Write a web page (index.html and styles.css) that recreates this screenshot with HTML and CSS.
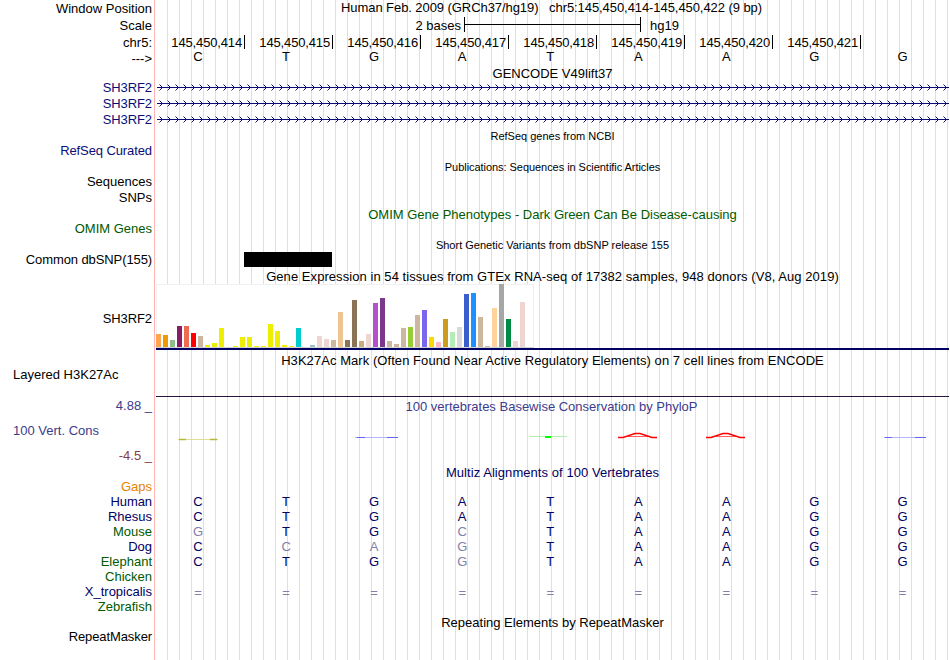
FILE: index.html
```html
<!DOCTYPE html>
<html lang="en">
<head>
    <meta charset="UTF-8">
    <title>hg19 chr5:145,450,414-145,450,422</title>
    <link rel="stylesheet" href="styles.css">
</head>
<body>
<div class="browser">
    <div class="row ruler"><div class="label">Window Position</div><div class="title position">Human Feb. 2009 (GRCh37/hg19) &nbsp; chr5:145,450,414-145,450,422 (9 bp)</div></div>
    <div class="row ruler"><div class="label">Scale</div><div class="scale"><span class="s-left">2 bases</span><i class="s-bar"></i><span>hg19</span></div></div>
    <div class="row ruler"><div class="label">chr5:</div>
        <div class="coords"><span>145,450,414</span><span>145,450,415</span><span>145,450,416</span><span>145,450,417</span><span>145,450,418</span><span>145,450,419</span><span>145,450,420</span><span>145,450,421</span></div>
    </div>
    <div class="row h15"><div class="label">---&gt;</div><div class="bases genome" data-seq="CTGATAAGG"></div></div>

    <div class="row h14"><div class="title">GENCODE V49lift37</div></div>
    <div class="row h16 navy"><div class="label tight">SH3RF2</div><svg class="gene" width="792" height="16"></svg></div>
    <div class="row h16 navy"><div class="label tight">SH3RF2</div><svg class="gene" width="792" height="16"></svg></div>
    <div class="row h16 navy"><div class="label tight">SH3RF2</div><svg class="gene" width="792" height="16"></svg></div>

    <div class="row h15"><div class="title small">RefSeq genes from NCBI</div></div>
    <div class="row h16 navy"><div class="label tight">RefSeq Curated</div></div>
    <div class="row h15"><div class="title small pubs">Publications: Sequences in Scientific Articles</div></div>
    <div class="row h16"><div class="label">Sequences</div></div>
    <div class="row h16"><div class="label">SNPs</div></div>
    <div class="row h15 green"><div class="title">OMIM Gene Phenotypes - Dark Green Can Be Disease-causing</div></div>
    <div class="row h16 green"><div class="label">OMIM Genes</div></div>
    <div class="row h15"><div class="title small">Short Genetic Variants from dbSNP release 155</div></div>
    <div class="row h16"><div class="label tight">Common dbSNP(155)</div><div class="snp"></div></div>

    <div class="row h16"><div class="title wide">Gene Expression in 54 tissues from GTEx RNA-seq of 17382 samples, 948 donors (V8, Aug 2019)</div></div>
    <div class="row gtex"><div class="label tight">SH3RF2</div><div class="expr"><div class="bars" id="bars"></div></div></div>

    <div class="row h20"><div class="title wide">H3K27Ac Mark (Often Found Near Active Regulatory Elements) on 7 cell lines from ENCODE</div></div>
    <div class="row hist"><div class="label left">Layered H3K27Ac</div></div>

    <div class="row h16 cons"><div class="label limit">4.88 _</div><div class="title phylop-title">100 vertebrates Basewise Conservation by PhyloP</div></div>
    <div class="row phylop">
        <div class="label left cons">100 Vert. Cons</div>
        <svg class="wiggle" width="793" height="34">
            <path d="M22 23.5H62" stroke="#dede98"/><path d="M23 23.5H30M54 23.5H61" stroke="#b8b840" stroke-width="1.5"/>
            <path d="M199 21.5H242" stroke="#b4b4ff"/><path d="M201 21.5H209M231 21.5H242" stroke="#6464ff"/>
            <path d="M373 20.5H411" stroke="#b0f0b0"/><path d="M389 21H395" stroke="#00ff00" stroke-width="2"/>
            <path d="M472 20.5H492M560 20.5H580" stroke="#ff6060"/>
            <path d="M462 21.5H467L479 17.5H484L496 21.5H501M550 21.5H555L567 17.5H572L584 21.5H589" fill="none" stroke="#ff0000" stroke-width="1.5"/>
            <path d="M728 21.5H770" stroke="#b4b4ff"/><path d="M729 21.5H736M759 21.5H770" stroke="#6464ff"/>
        </svg>
    </div>
    <div class="row h15 neg"><div class="label limit">-4.5 _</div></div>

    <div class="row h15 dark"><div class="title wide">Multiz Alignments of 100 Vertebrates</div></div>
    <div class="row h15 orange"><div class="label">Gaps</div></div>
    <div class="row h15 dark"><div class="label tight">Human</div><div class="bases" data-seq="CTGATAAGG"></div></div>
    <div class="row h15 dark"><div class="label">Rhesus</div><div class="bases" data-seq="CTGATAAGG"></div></div>
    <div class="row h15 green"><div class="label">Mouse</div><div class="bases" data-seq="gTGcTAAGG"></div></div>
    <div class="row h15 dark"><div class="label">Dog</div><div class="bases" data-seq="CcagTAAGG"></div></div>
    <div class="row h15 green"><div class="label">Elephant</div><div class="bases" data-seq="CTGgTAAGG"></div></div>
    <div class="row h15 green"><div class="label">Chicken</div></div>
    <div class="row h15 dark"><div class="label">X_tropicalis</div><div class="bases gap" data-seq="========="></div></div>
    <div class="row h15 green"><div class="label">Zebrafish</div></div>
    <div class="row h16"><div class="title">Repeating Elements by RepeatMasker</div></div>
    <div class="row h14"><div class="label tight">RepeatMasker</div></div>
</div>
<script src="tracks.js"></script>
</body>
</html>
```
FILE: styles.css
```css
body {
    margin: 0;
    background: #fff;
    font-family: "Liberation Sans", Arial, sans-serif;
    font-size: 13px;
    color: #000;
}

.browser {
    width: 949px;
    height: 660px;
    overflow: hidden;
    background:
        linear-gradient(#ffb4b4, #ffb4b4) 154px 0 / 1px 100% no-repeat,
        repeating-linear-gradient(90deg, #dcdcf5 0 1px, transparent 1px 12px) 167px 0 / 782px 100% no-repeat;
}

.row {
    display: grid;
    grid-template-columns: 152px 793px;
    grid-template-rows: 100%;
    column-gap: 4px;
    height: 16px;
    line-height: 16px;
    white-space: nowrap;
}

.h14 { height: 14px; line-height: 14px; }
.h15 { height: 15px; line-height: 15px; }
.h16 { height: 16px; line-height: 16px; }
.h20 { height: 20px; line-height: 20px; }
.ruler { height: 17px; line-height: 17px; }

.navy { color: #0c0c78; }
.dark { color: #000064; }
.green { color: #005a00; }
.orange { color: #e68200; }
.cons { color: #3c3c8c; }
.neg { color: #8c3c3c; }

.label {
    grid-column: 1;
    text-align: right;
}

.label.left {
    text-align: left;
    padding-left: 13px;
}

.label.limit { margin-top: -1px; }

.title {
    grid-column: 2;
    margin-top: 1px;
    text-align: center;
}

.title.position {
    margin: -1px 1px 0 -1px;
    letter-spacing: -0.07px;
}

.title.phylop-title {
    margin: 0 1px 0 -1px;
}

.small { font-size: 11px; }
.pubs { letter-spacing: -0.05px; }

.tight { letter-spacing: -0.1px; }
.wide { letter-spacing: 0.06px; }

.scale {
    display: flex;
}

.s-left {
    width: 305px;
    text-align: right;
}

.s-bar {
    width: 175px;
    height: 15px;
    margin: 0 9px 0 3px;
    border: solid #000;
    border-width: 0 1px;
    background: linear-gradient(#000, #000) 0 7px / 100% 1px no-repeat;
}

.coords {
    display: grid;
    grid-template-columns: repeat(9, 88px);
    margin-left: 1px;
    letter-spacing: -0.15px;
}

.coords span {
    height: 14px;
    margin-top: 1px;
    padding-right: 2px;
    line-height: 15px;
    text-align: right;
    border-right: 1px solid #000;
}

.bases {
    display: grid;
    grid-template-columns: repeat(9, 1fr);
    margin: 0 2.5px 0 -2px;
    color: #000064;
    text-align: center;
}

.bases.genome {
    margin-top: -2px;
    color: #000;
}

.bases.gap { margin-top: 1px; }

.bases span.diff { color: #8080aa; }

.gene { margin-left: 1px; }

.snp {
    width: 88px;
    height: 15px;
    margin-left: 88px;
    background: #000;
}

.gtex {
    height: 66px;
    line-height: 69px;
}

.expr {
    box-sizing: border-box;
    height: 66px;
    border-bottom: 2px solid #000064;
}

.bars {
    display: flex;
    align-items: flex-end;
    gap: 2px;
    box-sizing: border-box;
    width: 378px;
    height: 64px;
    background: linear-gradient(#f0f0f0, #f0f0f0) 0 0 / 100% 1px no-repeat, linear-gradient(90deg, #f0f0f0 1px, #fff 1px 377px, #f0f0f0 377px);
    border-bottom: 1px solid #d2d2d2;
}

.bars i {
    flex: none;
    width: 5px;
}

.hist {
    height: 29px;
    line-height: 10px;
    background: linear-gradient(#28143c, #28143c) 156px 26px / 793px 1px no-repeat;
}

.phylop {
    height: 34px;
    line-height: 32px;
}

.wiggle { margin-top: 1px; }
```
FILE: tracks.js
```js
// base letters, lower case = differs from human
document.querySelectorAll(".bases").forEach(function (row) {
    row.dataset.seq.split("").forEach(function (base) {
        var span = document.createElement("span");
        span.textContent = base.toUpperCase();
        if (base === "=" || base !== base.toUpperCase()) {
            span.className = "diff";
        }
        row.appendChild(span);
    });
});

// intron line with strand arrows every 8px
document.querySelectorAll(".gene").forEach(function (svg) {
    var arrows = "";
    var ends = "";
    for (var x = 3; x < 792; x += 8) {
        arrows += "M" + x + " 5.5h1M" + (x + 1) + " 6.5h1M" + (x + 2) + " 7.5h1M" + (x + 1) + " 8.5h1M" + x + " 9.5h1";
        ends += "M" + (x - 1) + " 4.5h1M" + (x - 1) + " 10.5h1";
    }
    svg.innerHTML = '<path d="M0 7.5H792' + arrows + '" stroke="#0c0c78"/>' +
        '<path d="' + ends + '" stroke="#8585bb"/>';
});

// tissue colour and median expression
var tissues = [
    ["#ffa54f", 13], ["#ee9a00", 12], ["#8fbc8f", 7], ["#8b1c62", 21], ["#ee6a50", 21], ["#ff0000", 14],
    ["#cdb79e", 11], ["#eeee00", 2], ["#eeee00", 4], ["#eeee00", 19], ["#eeee00", 0], ["#eeee00", 1],
    ["#eeee00", 10], ["#eeee00", 10], ["#eeee00", 1], ["#eeee00", 1], ["#eeee00", 23], ["#eeee00", 16],
    ["#eeee00", 2], ["#eeee00", 1], ["#00cdcd", 19], ["#ee82ee", 0], ["#9ac0cd", 2], ["#eed5d2", 11],
    ["#eed5d2", 8], ["#cdb79e", 7], ["#eec591", 35], ["#8b7355", 7], ["#8b7355", 47], ["#cdaa7d", 6],
    ["#eed5d2", 13], ["#b452cd", 44], ["#7a378b", 49], ["#cdb79e", 6], ["#cdb79e", 3], ["#cdb79e", 19],
    ["#9acd32", 20], ["#cdb79e", 32], ["#7a67ee", 37], ["#ffd700", 10], ["#ffb6c1", 5], ["#cd9b1d", 28],
    ["#b4eeb4", 15], ["#d9d9d9", 20], ["#3a5fcd", 53], ["#1e90ff", 54], ["#cdb79e", 30], ["#cdb79e", 1],
    ["#ffd39b", 39], ["#a6a6a6", 63], ["#008b45", 28], ["#eed5d2", 6], ["#eed5d2", 45], ["#ff00ff", 0]
];
var bars = document.getElementById("bars");
tissues.forEach(function (t) {
    var bar = document.createElement("i");
    bar.style.height = t[1] + "px";
    bar.style.background = t[0];
    bars.appendChild(bar);
});
```
